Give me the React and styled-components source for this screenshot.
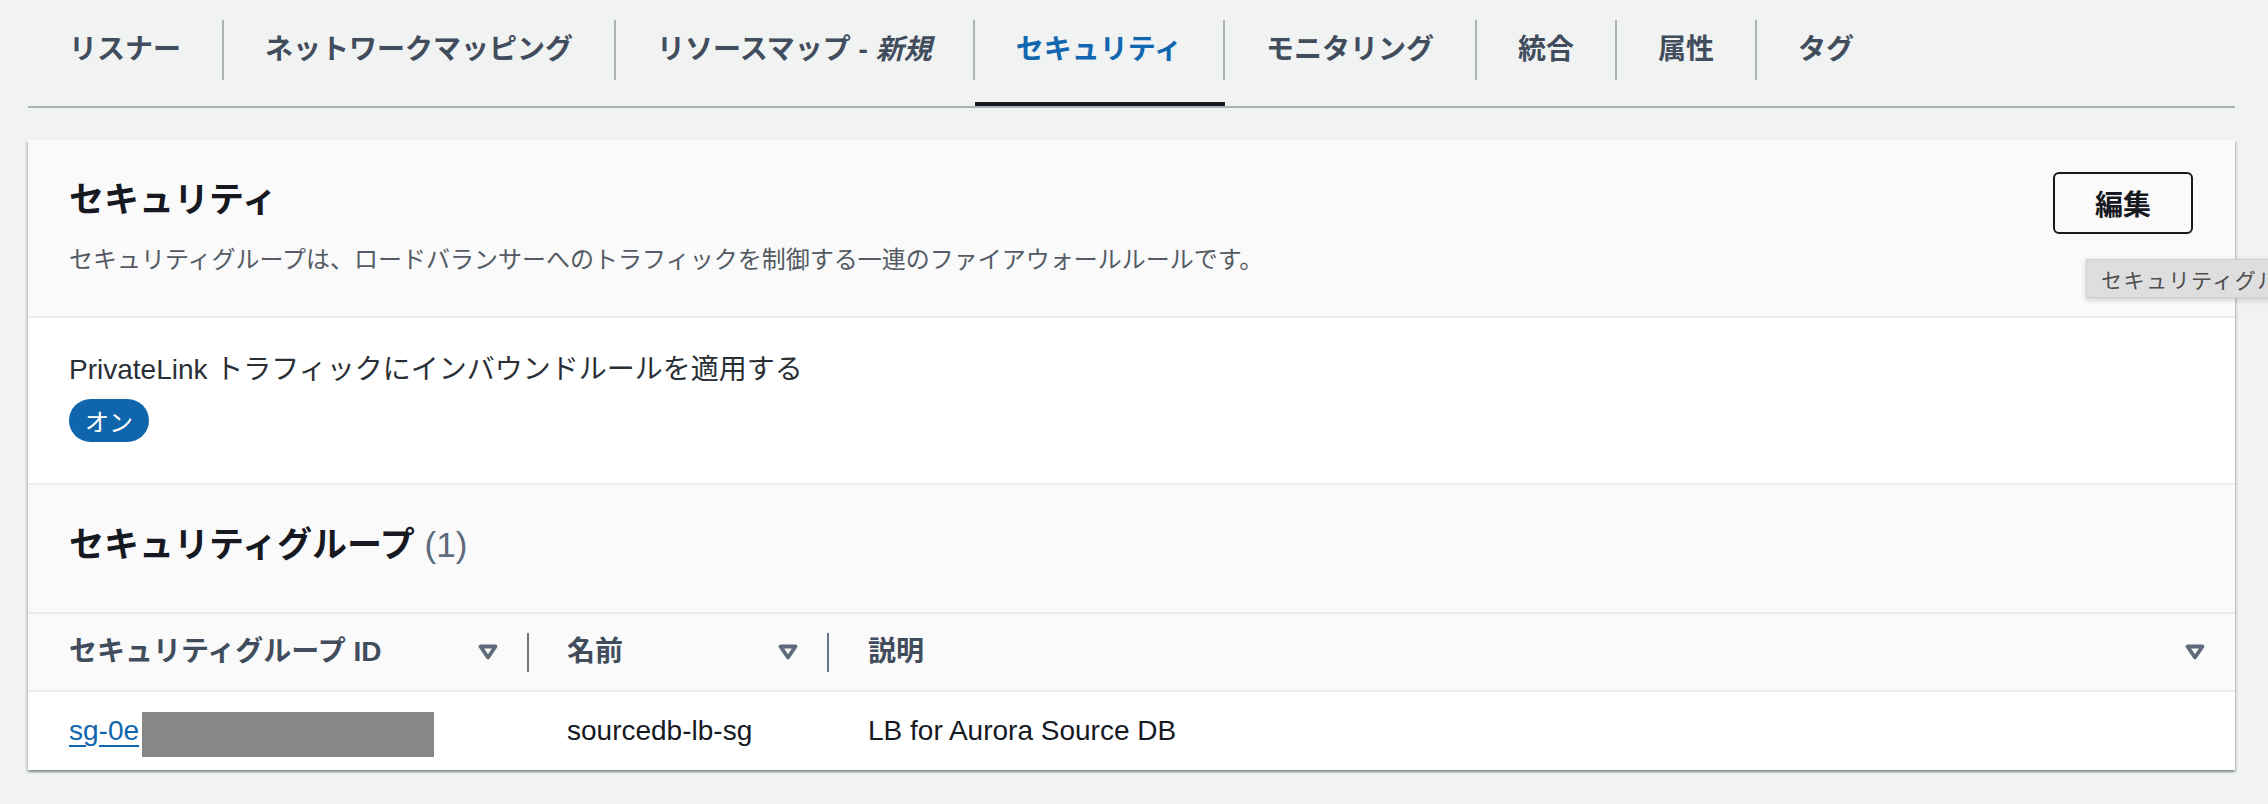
import React from "react";
import styled, { createGlobalStyle } from "styled-components";

const GlobalStyle = createGlobalStyle`
  html, body {
    margin: 0;
    padding: 0;
    background: #f1f2f2;
    overflow: hidden;
  }
  body {
    font-family: "Liberation Sans", "Noto Sans CJK JP", sans-serif;
    color: #16191f;
  }
  * {
    box-sizing: border-box;
  }
`;

const tabs = [
  { key: "listener", label: "リスナー" },
  { key: "network", label: "ネットワークマッピング" },
  { key: "resmap", label: "リソースマップ - ", suffix: "新規" },
  { key: "security", label: "セキュリティ", active: true },
  { key: "monitoring", label: "モニタリング" },
  { key: "integration", label: "統合" },
  { key: "attributes", label: "属性" },
  { key: "tags", label: "タグ" },
];

const SortIcon = () => (
  <svg width="20" height="16" viewBox="0 0 20 16" aria-hidden="true">
    <path
      d="M2.5 2.5 H17.5 L10 13.5 Z"
      fill="none"
      stroke="#5f6b7a"
      strokeWidth="3.8"
      strokeLinejoin="round"
    />
  </svg>
);

const App = () => {
  return (
    <>
      <GlobalStyle />
      <Page>
        <TabList>
          {tabs.map((t, i) => (
            <Tab key={t.key} $active={t.active}>
              <TabLabel $active={t.active} $last={i === tabs.length - 1}>
                {t.label}
                {t.suffix && <em>{t.suffix}</em>}
              </TabLabel>
            </Tab>
          ))}
        </TabList>

        <Card>
          <CardHeader>
            <TitleBlock>
              <Title>セキュリティ</Title>
              <Description>
                セキュリティグループは、ロードバランサーへのトラフィックを制御する一連のファイアウォールルールです。
              </Description>
            </TitleBlock>
            <EditButton>編集</EditButton>
            <Tooltip>セキュリティグループを編集</Tooltip>
          </CardHeader>

          <Section>
            <KeyLabel>PrivateLink トラフィックにインバウンドルールを適用する</KeyLabel>
            <Badge>オン</Badge>
          </Section>

          <GroupHeader>
            <Title>
              セキュリティグループ <Count>(1)</Count>
            </Title>
          </GroupHeader>

          <HeadRow>
            <HeadCell $pad={41}>
              <span>セキュリティグループ ID</span>
              <Spacer />
              <SortIcon />
              <ColDivider />
            </HeadCell>
            <HeadCell $pad={38}>
              <span>名前</span>
              <Spacer />
              <SortIcon />
              <ColDivider />
            </HeadCell>
            <HeadCell $pad={39} $last>
              <span>説明</span>
              <Spacer />
              <SortIcon />
            </HeadCell>
          </HeadRow>

          <BodyRow>
            <Cell $pad={41}>
              <IdLink href="#">sg-0e</IdLink>
              <Redacted />
            </Cell>
            <Cell $pad={38}>sourcedb-lb-sg</Cell>
            <Cell $pad={39}>LB for Aurora Source DB</Cell>
          </BodyRow>
        </Card>
      </Page>
    </>
  );
};

export default App;

const Page = styled.div`
  width: 2268px;
  height: 804px;
  padding: 0 33px 0 28px;
  overflow: hidden;
`;

const TabList = styled.div`
  display: flex;
  border-bottom: 2px solid #aab4b6;
`;

const Tab = styled.div`
  height: 106px;
  padding-top: 20px;
  border-bottom: 4px solid ${(p) => (p.$active ? "#16191f" : "transparent")};
`;

const TabLabel = styled.div`
  height: 60px;
  display: flex;
  align-items: center;
  padding: 0 41px;
  border-right: 2px solid ${(p) => (p.$last ? "transparent" : "#aab4b6")};
  font-size: 28px;
  font-weight: 700;
  line-height: 36px;
  white-space: pre;
  color: ${(p) => (p.$active ? "#1166b0" : "#414d5c")};

  em {
    font-style: italic;
  }
`;

const Card = styled.section`
  margin-top: 32px;
  background: #ffffff;
  box-shadow: 0 2px 2px 0 rgba(0, 28, 36, 0.3), 2px 2px 2px 0 rgba(0, 28, 36, 0.12),
    -2px 2px 2px 0 rgba(0, 28, 36, 0.12);
`;

const CardHeader = styled.div`
  position: relative;
  display: flex;
  justify-content: space-between;
  align-items: flex-start;
  padding: 32px 42px 40px 41px;
  background: #fafafa;
  border-bottom: 2px solid #eaeded;
`;

const TitleBlock = styled.div`
  padding-top: 6px;
`;

const Title = styled.h2`
  margin: 0;
  font-size: 35px;
  font-weight: 700;
  line-height: 44px;
  color: #16191f;
`;

const Count = styled.span`
  font-weight: 400;
  color: #5f6b7a;
`;

const Description = styled.p`
  margin: 22px 0 0;
  font-size: 24px;
  line-height: 32px;
  color: #545b64;
`;

const EditButton = styled.button`
  width: 140px;
  height: 62px;
  border: 2px solid #16191f;
  border-radius: 6px;
  background: #fafafa;
  font-family: inherit;
  font-size: 28px;
  font-weight: 700;
  color: #16191f;
  cursor: pointer;
`;

const Tooltip = styled.div`
  position: absolute;
  left: 2058px;
  top: 119px;
  height: 39px;
  padding: 0 14px;
  display: flex;
  align-items: center;
  white-space: nowrap;
  background: #dedede;
  border: 1px solid #d0d0d0;
  box-shadow: 0 2px 6px rgba(0, 0, 0, 0.18);
  font-size: 21px;
  letter-spacing: 1.5px;
  color: #4d4d4d;
`;

const Section = styled.div`
  padding: 34px 41px 41px;
  border-bottom: 2px solid #eaeded;
`;

const KeyLabel = styled.div`
  font-size: 28px;
  line-height: 36px;
  color: #2a2f36;
`;

const Badge = styled.span`
  margin-top: 11px;
  display: inline-flex;
  align-items: center;
  height: 43px;
  padding: 0 16px;
  border-radius: 22px;
  background: #1066ad;
  color: #ffffff;
  font-size: 24px;
`;

const GroupHeader = styled.div`
  padding: 38px 41px 45px;
  background: #fafafa;
  border-bottom: 2px solid #eaeded;
`;

const HeadRow = styled.div`
  display: grid;
  grid-template-columns: 501px 300px 1fr;
  height: 78px;
  background: #fafafa;
  border-bottom: 2px solid #eaeded;
`;

const HeadCell = styled.div`
  display: flex;
  align-items: center;
  padding-left: ${(p) => p.$pad}px;
  padding-right: ${(p) => (p.$last ? 30 : 0)}px;
  font-size: 28px;
  font-weight: 700;
  line-height: 36px;
  color: #414d5c;

  svg {
    margin-right: ${(p) => (p.$last ? 0 : 29)}px;
  }
`;

const Spacer = styled.span`
  flex: 1;
`;

const ColDivider = styled.span`
  width: 2px;
  height: 39px;
  background: #6b7682;
`;

const BodyRow = styled.div`
  display: grid;
  grid-template-columns: 501px 300px 1fr;
  height: 78px;
  align-items: center;
`;

const Cell = styled.div`
  display: flex;
  align-items: center;
  padding-left: ${(p) => p.$pad}px;
  font-size: 28px;
  line-height: 36px;
  color: #16191f;
`;

const IdLink = styled.a`
  color: #1066ad;
  text-decoration: underline;
  text-decoration-thickness: 2px;
  text-underline-offset: 5px;
`;

const Redacted = styled.span`
  display: inline-block;
  width: 292px;
  height: 45px;
  margin-left: 3px;
  margin-top: 6px;
  background: #878787;
`;
